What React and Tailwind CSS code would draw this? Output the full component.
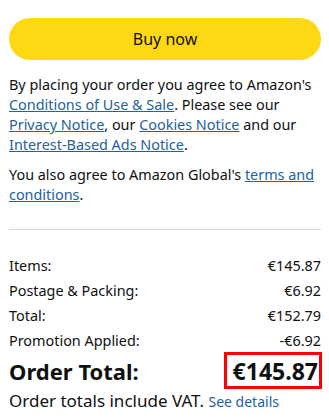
const linkCls = 'text-[#2162a1] underline underline-offset-[1px]'

function Row({ label, value }) {
  return (
    <div className="flex justify-between leading-5 mb-[5px]">
      <span>{label}</span>
      <span>{value}</span>
    </div>
  )
}

export default function App() {
  return (
    <div className="w-[329px] h-[419px] bg-white text-[#0f1111] px-[9px] pt-[18px] overflow-hidden font-['Noto_Sans',sans-serif] text-[14.4px]">
      <button className="w-[312px] h-[42px] rounded-full bg-[#ffd814] text-[16px] text-[#0f1111]">
        Buy now
      </button>

      <p className="mt-[15px] leading-5">
        By placing your order you agree to Amazon's{' '}
        <a className={linkCls}>Conditions of Use &amp; Sale</a>. Please see our{' '}
        <a className={linkCls}>Privacy Notice</a>, our <a className={linkCls}>Cookies Notice</a> and our{' '}
        <a className={linkCls}>Interest-Based Ads Notice</a>.
      </p>
      <p className="mt-[10px] leading-5">
        You also agree to Amazon Global's <a className={linkCls}>terms and conditions</a>.
      </p>

      <div className="mt-[24px] h-px w-[312px] bg-[#d5d9d9]" />

      <div className="mt-[26px] w-[312px]">
        <Row label="Items:" value="€145.87" />
        <Row label="Postage & Packing:" value="€6.92" />
        <Row label="Total:" value="€152.79" />
        <Row label="Promotion Applied:" value="-€6.92" />
        <div className="flex justify-between items-center font-bold text-[22px] leading-[30px] mt-[3px]">
          <span>Order Total:</span>
          <span className="relative pr-[3px] text-[23px]">
            €145.87
            <span className="absolute -left-[9px] -right-[1px] -top-[4px] -bottom-[3px] border-[3px] border-[#ff0000]" />
          </span>
        </div>
        <div className="mt-[4px] text-[17px] leading-[22px]">
          Order totals include VAT. <a className="text-[#2162a1] text-[14px]">See details</a>
        </div>
      </div>
    </div>
  )
}
